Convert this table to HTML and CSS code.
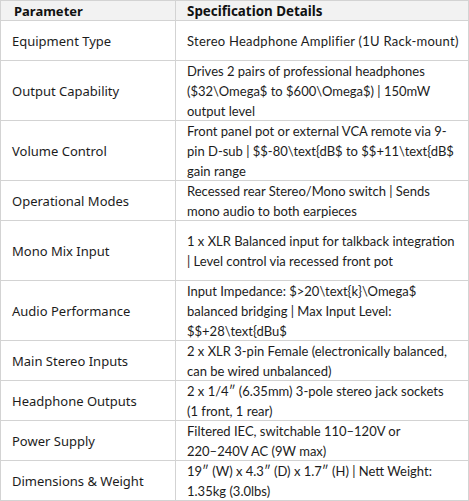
FILE: index.html
```html
<!DOCTYPE html>
<html>
<head>
<meta charset="utf-8">
<link rel="stylesheet" href="styles.css">
</head>
<body>
<div class="spec">
  <div class="row head">
    <div class="cell param">Parameter</div>
    <div class="cell detail">Specification Details</div>
  </div>
  <div class="row h40">
    <div class="cell param">Equipment Type</div>
    <div class="cell detail"><span class="ln wide">Stereo Headphone Amplifier (1U Rack-mount)</span></div>
  </div>
  <div class="row h60">
    <div class="cell param">Output Capability</div>
    <div class="cell detail"><span class="ln">Drives 2 pairs of professional headphones</span><span class="ln">($32\Omega$ to $600\Omega$) | 150mW</span><span class="ln">output level</span></div>
  </div>
  <div class="row h60">
    <div class="cell param">Volume Control</div>
    <div class="cell detail"><span class="ln">Front panel pot or external VCA remote via 9-</span><span class="ln">pin D-sub | $$-80\text{dB$ to $$+11\text{dB$</span><span class="ln">gain range</span></div>
  </div>
  <div class="row h40">
    <div class="cell param">Operational Modes</div>
    <div class="cell detail"><span class="ln">Recessed rear Stereo/Mono switch | Sends</span><span class="ln">mono audio to both earpieces</span></div>
  </div>
  <div class="row h60">
    <div class="cell param">Mono Mix Input</div>
    <div class="cell detail"><span class="ln">1 x XLR Balanced input for talkback integration</span><span class="ln">| Level control via recessed front pot</span></div>
  </div>
  <div class="row h60">
    <div class="cell param">Audio Performance</div>
    <div class="cell detail"><span class="ln">Input Impedance: $&gt;20\text{k}\Omega$</span><span class="ln">balanced bridging | Max Input Level:</span><span class="ln">$$+28\text{dBu$</span></div>
  </div>
  <div class="row h40">
    <div class="cell param">Main Stereo Inputs</div>
    <div class="cell detail"><span class="ln">2 x XLR 3-pin Female (electronically balanced,</span><span class="ln">can be wired unbalanced)</span></div>
  </div>
  <div class="row h40">
    <div class="cell param">Headphone Outputs</div>
    <div class="cell detail"><span class="ln">2 x 1/4″ (6.35mm) 3-pole stereo jack sockets</span><span class="ln">(1 front, 1 rear)</span></div>
  </div>
  <div class="row h40">
    <div class="cell param">Power Supply</div>
    <div class="cell detail"><span class="ln">Filtered IEC, switchable 110–120V or</span><span class="ln">220–240V AC (9W max)</span></div>
  </div>
  <div class="row h40">
    <div class="cell param">Dimensions &amp; Weight</div>
    <div class="cell detail"><span class="ln">19″ (W) x 4.3″ (D) x 1.7″ (H) | Nett Weight:</span><span class="ln">1.35kg (3.0lbs)</span></div>
  </div>
</div>
</body>
</html>
```
FILE: styles.css
```css
html, body {
  margin: 0;
  padding: 0;
  background: #ffffff;
}
.spec {
  width: 469px;
  color: #1c1c1c;
  border-top: 1px solid #d3d3d3;
}
.row {
  display: grid;
  grid-template-columns: 176px 293px;
  height: 40px;
}
.row.head {
  height: 20px;
  background: #f2f2f2;
}
.row.h60 {
  height: 60px;
}
.cell {
  box-sizing: border-box;
  border-bottom: 1px solid #d3d3d3;
  border-right: 1px solid #d3d3d3;
  padding-left: 11px;
  display: flex;
  flex-direction: column;
  justify-content: center;
  overflow: hidden;
  white-space: nowrap;
}
.cell.param {
  border-left: 1px solid #d3d3d3;
  font-family: "Noto Sans", "Open Sans", sans-serif;
  font-size: 13px;
  line-height: 20px;
}
.cell.detail {
  font-family: Lato, "Liberation Sans", sans-serif;
  font-size: 13px;
  line-height: 20px;
}
.head .cell {
  font-family: "Noto Sans", "Open Sans", sans-serif;
  font-weight: bold;
  font-size: 13px;
  line-height: 18px;
  color: #111;
}
.head .cell.param {
  padding-left: 13px;
}
.head .cell.detail {
  font-size: 13.4px;
}
.ln {
  display: block;
  white-space: nowrap;
}
.ln.wide {
  letter-spacing: 0.25px;
}
```
